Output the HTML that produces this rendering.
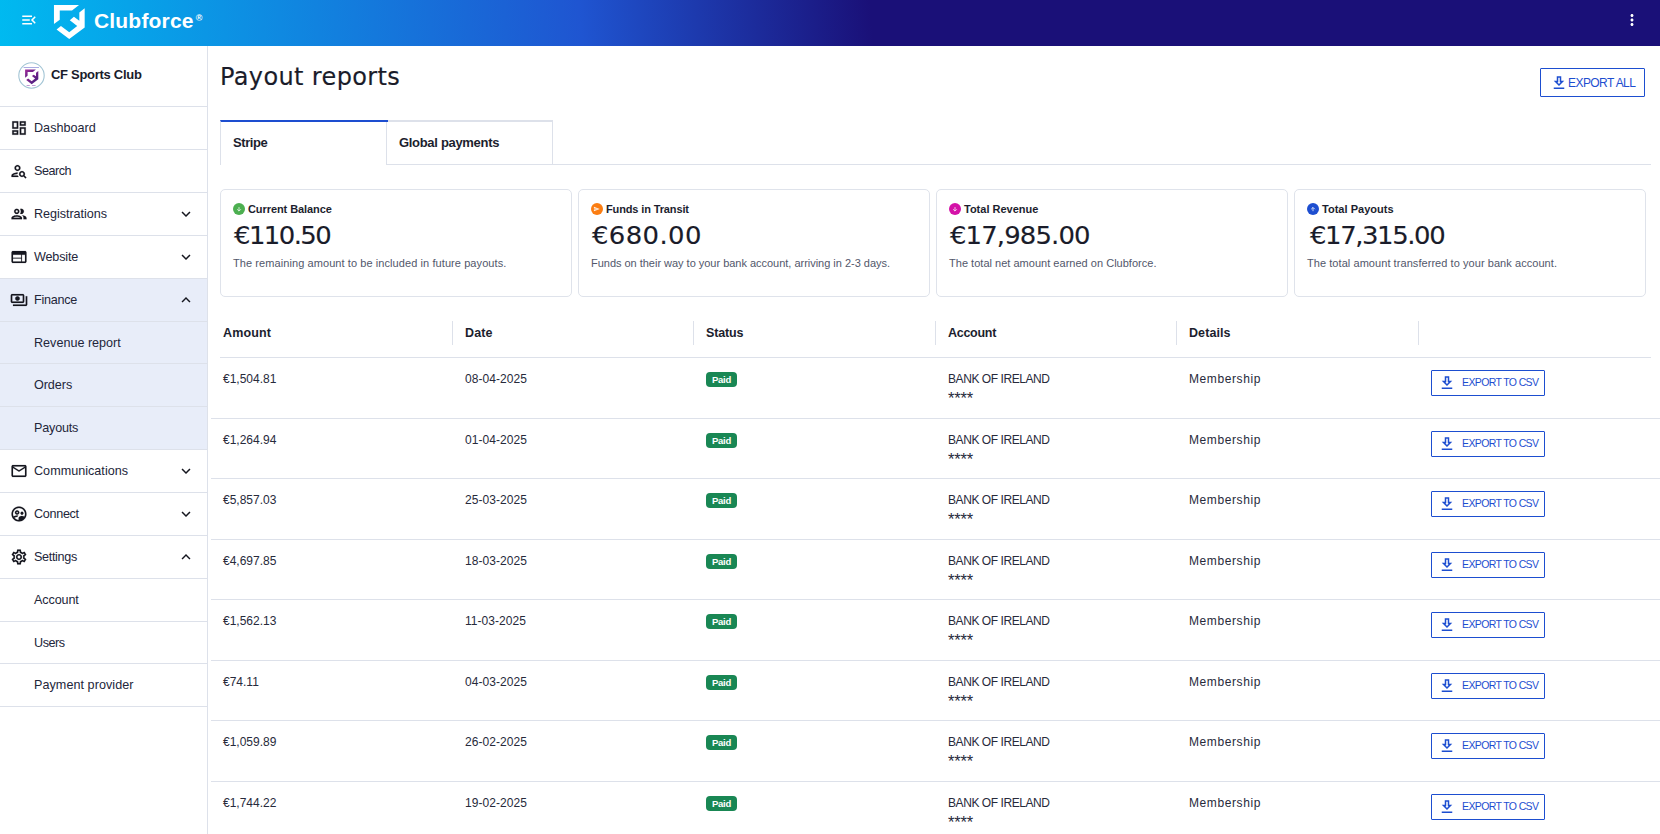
<!DOCTYPE html>
<html lang="en">
<head>
<meta charset="utf-8">
<title>Payout reports</title>
<style>
*{box-sizing:border-box}
html,body{margin:0;padding:0}
body{width:1660px;height:834px;overflow:hidden;background:#fff;color:#1c1e2e;font-family:"Liberation Sans",sans-serif;font-size:13px;position:relative}
.hdr{position:absolute;left:0;top:0;width:1660px;height:46px;background:linear-gradient(85deg,#00baf0 0%,#1f55d1 35%,#1a1078 52.5%,#1a1078 100%)}
.hdr svg{position:absolute}
.brand{position:absolute;left:94px;top:9px;color:#fff;font-weight:bold;font-size:21px;line-height:24px;white-space:nowrap}
.brand sup{font-size:9px;font-weight:bold;position:absolute;top:-3px;margin-left:2px;line-height:24px}
.side{position:absolute;left:0;top:46px;width:208px;height:788px;border-right:1px solid #dde1ea;background:#fff}
.club{position:absolute;left:0;top:0;width:207px;height:61px;border-bottom:1px solid #dde1ea}
.club .av{position:absolute;left:18px;top:16px;width:27px;height:27px}
.club .nm{position:absolute;left:51px;top:21px;font-weight:bold;font-size:13px;line-height:16px;white-space:nowrap;color:#1a1c2b}
.mi{position:absolute;left:0;width:207px;border-bottom:1px solid #dde1ea;white-space:nowrap}
.mi.on{background:#e8edf9}
.mi .t{position:absolute;left:34px;top:13px;font-size:12.6px;line-height:16px;color:#23263a}
.mi svg.ic{position:absolute;left:10px;top:12px;width:18px;height:18px;fill:#15161f;stroke:#15161f;stroke-width:.2}
.mi svg.ch{position:absolute;left:177px;top:12px;width:18px;height:18px;fill:#15161f}
.main{position:absolute;left:208px;top:46px;width:1452px;height:788px;overflow:hidden}
h1{position:absolute;left:12px;top:15px;-webkit-text-stroke:.15px #1a1c2a;margin:0;font-weight:normal;font-family:"DejaVu Sans","Liberation Sans",sans-serif;font-size:24px;line-height:32px;white-space:nowrap;color:#1a1c2a}
.btn{position:absolute;border:1px solid #1d4ed0;border-radius:1px;color:#1d4ed0;background:#fff;white-space:nowrap}
.btn svg{position:absolute;width:18px;height:18px;fill:#1d4ed0}
.btn .x{position:absolute;left:27px;top:7px;font-size:12px;line-height:15px}
.b2{left:1220px;top:12px;width:114px;height:26px}
.b2 svg{left:6px;top:3px}
.btn.b2 .x{left:30px;top:4px;font-size:10.5px;line-height:14px}
.tab{position:absolute;top:74px;height:45px;width:167px;font-weight:bold;font-size:13px;white-space:nowrap;border-left:1px solid #dde1ea;border-top:2px solid #dde1ea}
.tab span{position:absolute;left:12px;top:13px;line-height:16px}
.t1{left:12px;width:168px;z-index:2;border-top-color:#1d4ed0}
.t2{left:178px;width:167px;border-right:1px solid #dde1ea}
.tabline{position:absolute;left:179px;top:118px;width:1264px;height:1px;background:#dde1ea}
.card{position:absolute;top:143px;width:352px;height:108px;border:1px solid #dfe3eb;border-radius:5px;background:#fff}
.card .dot{position:absolute;left:12px;top:13px;width:12px;height:12px}
.card .lb{position:absolute;left:27px;top:12px;font-weight:bold;font-size:11px;line-height:14px;white-space:nowrap}
.card .am{position:absolute;left:13px;top:30px;transform:scaleX(1.05);transform-origin:0 0;-webkit-text-stroke:.15px #1a1c2a;color:#1a1c2a;font-family:"DejaVu Sans","Liberation Sans",sans-serif;font-size:24.7px;line-height:32px;white-space:nowrap}
.card.k4 .am{left:15px}
.card .ds{position:absolute;left:12px;top:66px;font-size:11px;line-height:14px;white-space:nowrap;color:#52576b}
.th{position:absolute;top:279px;font-weight:bold;font-size:12.5px;line-height:16px;white-space:nowrap}
.vs{position:absolute;top:275px;width:1px;height:24px;background:#dde1ea}
.hl{position:absolute;left:12px;top:311px;width:1431px;height:1px;background:#dde1ea}
.row{position:absolute;left:3px;width:1449px;border-bottom:1px solid #dde1ea;font-size:12px;white-space:nowrap;color:#272a3b}
.row span{position:absolute;line-height:15px;top:14px}
.row .c1{left:12px}.row .c2{left:254px}.row .c4{left:737px}.row .c4b{left:737px;top:32.5px;font-size:16.5px;letter-spacing:-0.15px}.row .c5{left:978px}
.row .bd{left:495px;top:14px;width:31px;height:15px;border-radius:4px;background:#198754;color:#fff;font-weight:bold;font-size:9.5px;line-height:15.5px;text-align:center}
.row .bd span{position:static}
</style>
</head>
<body>
<div class="hdr">
<svg style="left:20px;top:11px;width:18px;height:18px;fill:#fff" viewBox="0 0 24 24"><path d="M3 18h13v-2H3v2zm0-5h10v-2H3v2zm0-7v2h13V6H3zm18 9.59L17.42 12 21 8.41 19.59 7l-5 5 5 5L21 15.59z"/></svg>
<svg style="left:0;top:0;width:100px;height:46px" viewBox="0 0 100 46"><polygon fill="#fff" points="53.96,5.07 79.05,5.07 72,10.48 59.75,10.48 59.75,19.69 53.96,24"/><polygon fill="#fff" points="84.68,8.27 84.68,27.58 69.24,39.05 56.55,29.5 60.96,26.03 69.24,32.27 77.23,25.92 69.79,20.13 73.92,16.82 79.33,20.68 79.33,12.41"/></svg>
<div class="brand"><span style="letter-spacing:0.18px">Clubforce</span><sup>®</sup></div>
<svg style="left:1623px;top:11px;width:18px;height:18px;fill:#fff" viewBox="0 0 24 24"><path d="M12 8c1.1 0 2-.9 2-2s-.9-2-2-2-2 .9-2 2 .9 2 2 2zm0 2c-1.1 0-2 .9-2 2s.9 2 2 2 2-.9 2-2-.9-2-2-2zm0 6c-1.1 0-2 .9-2 2s.9 2 2 2 2-.9 2-2-.9-2-2-2z"/></svg>
</div>
<div class="side">
<div class="club"><svg class="av" viewBox="0 0 27 27"><defs><linearGradient id="pg" x1="0" y1="0" x2="1" y2="1"><stop offset="0" stop-color="#a42c9b"/><stop offset="1" stop-color="#3a1a78"/></linearGradient></defs><circle cx="13.5" cy="13.5" r="12.7" fill="#fff" stroke="#a3c5d5" stroke-width="1.1"/><g transform="translate(-16.1,5.4) scale(0.43)" fill="url(#pg)"><polygon points="53.96,5.07 79.05,5.07 72,10.48 59.75,10.48 59.75,19.69 53.96,24"/><polygon points="84.68,8.27 84.68,27.58 69.24,39.05 56.55,29.5 60.96,26.03 69.24,32.27 77.23,25.92 69.79,20.13 73.92,16.82 79.33,20.68 79.33,12.41"/></g><rect x="5.6" y="5.2" width="15.4" height="0.7" fill="#5b63c9" opacity=".75"/><rect x="8.6" y="23" width="3.2" height="0.9" fill="#8a4ab0" opacity=".6"/><rect x="14" y="23" width="3.6" height="0.9" fill="#8a4ab0" opacity=".6"/></svg><span class="nm" style="letter-spacing:-0.29px">CF Sports Club</span></div>
<div class="mi" style="top:61px;height:43px"><svg class="ic" viewBox="0 0 24 24"><path d="M19 5v2h-4V5h4M9 5v6H5V5h4m10 8v6h-4v-6h4M9 17v2H5v-2h4M21 3h-8v6h8V3zM11 3H3v10h8V3zm10 8h-8v10h8V11zm-10 4H3v6h8v-6z"/></svg><span class="t" style="letter-spacing:0.02px">Dashboard</span></div>
<div class="mi" style="top:104px;height:43px"><svg class="ic" viewBox="0 0 24 24"><path d="M10 12c2.21 0 4-1.79 4-4s-1.79-4-4-4-4 1.79-4 4 1.79 4 4 4zm0-6c1.1 0 2 .9 2 2s-.9 2-2 2-2-.9-2-2 .9-2 2-2zM4 18c.22-.72 3.31-2 6-2 0-.7.13-1.37.35-1.99C7.62 13.91 2 15.27 2 18v2h9.540c-.52-.58-.93-1.25-1.19-2H4zm15.43.02c.36-.59.57-1.28.57-2.02 0-2.21-1.79-4-4-4s-4 1.790-4 4 1.790 4 4 4c.74 0 1.430-.22 2.020-.57L20.590 22 22 20.590l-2.570-2.570zM16 18c-1.100 0-2-.9-2-2s.9-2 2-2 2 .9 2 2-.9 2-2 2z"/></svg><span class="t" style="letter-spacing:-0.48px">Search</span></div>
<div class="mi" style="top:147px;height:43px"><svg class="ic" viewBox="0 0 24 24"><path d="M9 13.75c-2.340 0-7 1.170-7 3.500V19h14v-1.750c0-2.330-4.660-3.500-7-3.500zM4.340 17c.840-.580 2.870-1.250 4.660-1.250s3.820.670 4.660 1.250H4.340zM9 12c1.930 0 3.500-1.570 3.500-3.500S10.930 5 9 5 5.500 6.570 5.500 8.500 7.070 12 9 12zm0-5c.830 0 1.500.670 1.500 1.500S9.830 10 9 10s-1.500-.670-1.500-1.500S8.170 7 9 7zm7.040 6.810c1.160.840 1.960 1.960 1.960 3.440V19h4v-1.750c0-2.020-3.500-3.170-5.960-3.440zM15 12c1.930 0 3.500-1.570 3.500-3.500S16.930 5 15 5c-.540 0-1.040.130-1.500.350.630.890 1 1.980 1 3.150s-.370 2.260-1 3.150c.460.220.960.350 1.500.350z"/></svg><span class="t" style="letter-spacing:-0.04px">Registrations</span><svg class="ch" viewBox="0 0 24 24"><path d="M16.590 8.590L12 13.170 7.410 8.590 6 10l6 6 6-6z"/></svg></div>
<div class="mi" style="top:190px;height:43px"><svg class="ic" viewBox="0 0 24 24"><path d="M20 4H4c-1.100 0-1.990.9-1.990 2L2 18c0 1.100.9 2 2 2h16c1.100 0 2-.9 2-2V6c0-1.100-.9-2-2-2zm-5 14H4v-4h11v4zm0-5H4V9h11v4zm5 5h-4V9h4v9z"/></svg><span class="t" style="letter-spacing:-0.16px">Website</span><svg class="ch" viewBox="0 0 24 24"><path d="M16.590 8.590L12 13.170 7.410 8.590 6 10l6 6 6-6z"/></svg></div>
<div class="mi on" style="top:233px;height:43px"><svg class="ic" viewBox="0 0 24 24"><path d="M19 14V6c0-1.100-.9-2-2-2H3c-1.100 0-2 .9-2 2v8c0 1.100.9 2 2 2h14c1.100 0 2-.9 2-2zm-2 0H3V6h14v8zm-7-7c-1.660 0-3 1.340-3 3s1.340 3 3 3 3-1.340 3-3-1.340-3-3-3zm13 0v11c0 1.100-.9 2-2 2H4v-2h17V7h2z"/></svg><span class="t" style="letter-spacing:-0.25px">Finance</span><svg class="ch" viewBox="0 0 24 24"><path d="M12 8l-6 6 1.410 1.410L12 10.830l4.590 4.580L18 14z"/></svg></div>
<div class="mi on" style="top:276px;height:42px"><span class="t" style="letter-spacing:0.0px">Revenue report</span></div>
<div class="mi on" style="top:318px;height:43px"><span class="t" style="letter-spacing:-0.06px">Orders</span></div>
<div class="mi on" style="top:361px;height:43px"><span class="t" style="letter-spacing:-0.19px">Payouts</span></div>
<div class="mi" style="top:404px;height:43px"><svg class="ic" viewBox="0 0 24 24"><path d="M22 6c0-1.100-.9-2-2-2H4c-1.100 0-2 .9-2 2v12c0 1.100.9 2 2 2h16c1.100 0 2-.9 2-2V6zm-2 0l-8 5-8-5h16zm0 12H4V8l8 5 8-5v10z"/></svg><span class="t" style="letter-spacing:0.02px">Communications</span><svg class="ch" viewBox="0 0 24 24"><path d="M16.590 8.590L12 13.170 7.410 8.590 6 10l6 6 6-6z"/></svg></div>
<div class="mi" style="top:447px;height:43px"><svg class="ic" viewBox="0 0 24 24"><path d="M12.500 10c0-1.650-1.350-3-3-3s-3 1.350-3 3 1.350 3 3 3 3-1.350 3-3zm-3 1c-.550 0-1-.450-1-1s.450-1 1-1 1 .450 1 1-.450 1-1 1zm6.500 2c1.110 0 2-.890 2-2 0-1.110-.890-2-2-2-1.110 0-2.010.890-2 2 0 1.110.890 2 2 2zM11.990 2.010c-5.520 0-10 4.480-10 10s4.480 10 10 10 10-4.480 10-10-4.480-10-10-10zM5.840 17.120c.680-.540 2.270-1.110 3.660-1.110.070 0 .150.010.230.010.240-.640.670-1.290 1.300-1.860-.560-.100-1.090-.160-1.530-.160-1.300 0-3.390.450-4.730 1.430-.5-1.040-.780-2.200-.780-3.430 0-4.410 3.590-8 8-8s8 3.590 8 8c0 1.200-.270 2.340-.750 3.370-1-.590-2.360-.870-3.240-.870-1.520 0-4.500.810-4.500 2.700v2.780c-2.270-.130-4.290-1.210-5.660-2.860z"/></svg><span class="t" style="letter-spacing:-0.3px">Connect</span><svg class="ch" viewBox="0 0 24 24"><path d="M16.590 8.590L12 13.170 7.410 8.590 6 10l6 6 6-6z"/></svg></div>
<div class="mi" style="top:490px;height:43px"><svg class="ic" viewBox="0 0 24 24"><path d="M19.430 12.980c.040-.320.070-.640.070-.980 0-.340-.030-.660-.070-.980l2.110-1.650c.190-.150.240-.420.120-.640l-2-3.460c-.090-.160-.260-.250-.440-.250-.060 0-.120.010-.170.030l-2.490 1c-.520-.400-1.080-.730-1.690-.980l-.380-2.650C14.460 2.180 14.250 2 14 2h-4c-.250 0-.460.180-.490.420l-.380 2.650c-.610.250-1.170.590-1.690.980l-2.490-1c-.060-.020-.120-.030-.180-.030-.170 0-.340.090-.430.250l-2 3.460c-.130.220-.070.490.120.640l2.110 1.650c-.040.320-.070.650-.070.980 0 .330.030.660.070.980l-2.110 1.650c-.190.150-.240.420-.120.640l2 3.460c.090.160.260.250.440.250.060 0 .120-.010.170-.030l2.490-1c.520.400 1.080.730 1.690.980l.380 2.650c.030.240.240.420.490.420h4c.250 0 .460-.180.490-.420l.380-2.650c.610-.250 1.170-.590 1.690-.980l2.490 1c.060.020.120.030.180.030.170 0 .340-.090.430-.250l2-3.460c.120-.220.070-.490-.120-.640l-2.110-1.650zm-1.980-1.710c.040.310.050.520.050.730 0 .210-.020.430-.050.730l-.140 1.130.890.700 1.080.840-.700 1.210-1.270-.510-1.040-.420-.900.680c-.430.320-.840.560-1.250.730l-1.060.430-.160 1.130-.200 1.350h-1.400l-.190-1.350-.160-1.130-1.060-.430c-.430-.180-.830-.410-1.230-.710l-.910-.700-1.060.430-1.270.510-.700-1.210 1.080-.840.890-.700-.140-1.130c-.030-.310-.050-.540-.050-.740s.020-.430.050-.730l.140-1.130-.890-.700-1.080-.840.700-1.210 1.270.510 1.040.420.900-.680c.430-.320.840-.560 1.250-.730l1.060-.430.160-1.130.200-1.350h1.390l.190 1.350.160 1.130 1.060.430c.430.180.830.410 1.230.710l.910.700 1.060-.430 1.270-.510.700 1.210-1.070.850-.890.700.14 1.130zM12 8c-2.210 0-4 1.790-4 4s1.790 4 4 4 4-1.790 4-4-1.790-4-4-4zm0 6c-1.100 0-2-.9-2-2s.9-2 2-2 2 .9 2 2-.9 2-2 2z"/></svg><span class="t" style="letter-spacing:-0.32px">Settings</span><svg class="ch" viewBox="0 0 24 24"><path d="M12 8l-6 6 1.410 1.410L12 10.830l4.590 4.580L18 14z"/></svg></div>
<div class="mi" style="top:533px;height:43px"><span class="t" style="letter-spacing:-0.11px">Account</span></div>
<div class="mi" style="top:576px;height:42px"><span class="t" style="letter-spacing:-0.45px">Users</span></div>
<div class="mi" style="top:618px;height:43px"><span class="t" style="letter-spacing:0.05px">Payment provider</span></div>
</div>
<div class="main">
<h1><span style="letter-spacing:0.37px">Payout reports</span></h1>
<div class="btn" style="left:1332px;top:22px;width:105px;height:29px"><svg style="left:9px;top:5px" viewBox="0 0 24 24"><path d="M19 9h-4V3H9v6H5l7 7 7-7zm-8 2V5h2v6h1.170L12 13.170 9.830 11H11zm-6 7h14v2H5z"/></svg><span class="x" style="letter-spacing:-0.56px">EXPORT ALL</span></div>
<div class="tab t1"><span style="letter-spacing:-0.4px">Stripe</span></div><div class="tab t2"><span style="letter-spacing:-0.31px">Global payments</span></div><div class="tabline"></div>
<div class="card" style="left:12px"><svg class="dot" viewBox="0 0 12 12"><circle cx="6" cy="6" r="6" fill="#4caf50"/><path d="M6 4.100v3.600M4.200 6.300L6 8.100l1.800-1.800" fill="none" stroke="#fff" stroke-opacity=".75" stroke-width="1"/></svg><span class="lb" style="letter-spacing:-0.08px">Current Balance</span><span class="am" style="letter-spacing:-1.5px">€110.50</span><span class="ds" style="letter-spacing:0.08px">The remaining amount to be included in future payouts.</span></div>
<div class="card" style="left:370px"><svg class="dot" viewBox="0 0 12 12"><circle cx="6" cy="6" r="6" fill="#fb7d12"/><path d="M2.900 3.800L8.700 6.050 2.900 8.300V6.550L7 6.050 2.900 5.550z" fill="#fff" fill-opacity=".9"/></svg><span class="lb" style="letter-spacing:-0.13px">Funds in Transit</span><span class="am" style="letter-spacing:0.36px">€680.00</span><span class="ds" style="letter-spacing:-0.02px">Funds on their way to your bank account, arriving in 2-3 days.</span></div>
<div class="card" style="left:728px"><svg class="dot" viewBox="0 0 12 12"><circle cx="6" cy="6" r="6" fill="#d412a8"/><path d="M6 4.100v3.600M4.200 6.300L6 8.100l1.800-1.800" fill="none" stroke="#fff" stroke-opacity=".75" stroke-width="1"/></svg><span class="lb" style="letter-spacing:0.0px">Total Revenue</span><span class="am" style="letter-spacing:-0.83px">€17,985.00</span><span class="ds" style="letter-spacing:0.02px">The total net amount earned on Clubforce.</span></div>
<div class="card k4" style="left:1086px"><svg class="dot" viewBox="0 0 12 12"><circle cx="6" cy="6" r="6" fill="#1d4ed0"/><path d="M6 8.200V4.600M4.200 6.200L6 4.400l1.800 1.800" fill="none" stroke="#fff" stroke-opacity=".75" stroke-width="1"/></svg><span class="lb" style="letter-spacing:0.02px">Total Payouts</span><span class="am" style="letter-spacing:-1.35px">€17,315.00</span><span class="ds" style="letter-spacing:0.06px">The total amount transferred to your bank account.</span></div>
<div class="th" style="left:15px"><span style="letter-spacing:0.14px">Amount</span></div>
<div class="th" style="left:257px"><span style="letter-spacing:0.1px">Date</span></div>
<div class="th" style="left:498px"><span style="letter-spacing:-0.14px">Status</span></div>
<div class="th" style="left:740px"><span style="letter-spacing:-0.28px">Account</span></div>
<div class="th" style="left:981px"><span style="letter-spacing:0.08px">Details</span></div>
<div class="vs" style="left:244px"></div>
<div class="vs" style="left:485px"></div>
<div class="vs" style="left:727px"></div>
<div class="vs" style="left:968px"></div>
<div class="vs" style="left:1210px"></div>
<div class="hl"></div>
<div class="row" style="top:312px;height:61px"><span class="c1" style="letter-spacing:0.0px">€1,504.81</span><span class="c2" style="letter-spacing:0.05px">08-04-2025</span><span class="bd"><span style="letter-spacing:-0.3px">Paid</span></span><span class="c4" style="letter-spacing:-0.43px">BANK OF IRELAND</span><span class="c4b">****</span><span class="c5" style="letter-spacing:0.6px">Membership</span><div class="btn b2"><svg viewBox="0 0 24 24"><path d="M19 9h-4V3H9v6H5l7 7 7-7zm-8 2V5h2v6h1.170L12 13.170 9.830 11H11zm-6 7h14v2H5z"/></svg><span class="x" style="letter-spacing:-0.62px">EXPORT TO CSV</span></div></div>
<div class="row" style="top:373px;height:60px"><span class="c1" style="letter-spacing:0.0px">€1,264.94</span><span class="c2" style="letter-spacing:0.05px">01-04-2025</span><span class="bd"><span style="letter-spacing:-0.3px">Paid</span></span><span class="c4" style="letter-spacing:-0.43px">BANK OF IRELAND</span><span class="c4b">****</span><span class="c5" style="letter-spacing:0.6px">Membership</span><div class="btn b2"><svg viewBox="0 0 24 24"><path d="M19 9h-4V3H9v6H5l7 7 7-7zm-8 2V5h2v6h1.170L12 13.170 9.830 11H11zm-6 7h14v2H5z"/></svg><span class="x" style="letter-spacing:-0.62px">EXPORT TO CSV</span></div></div>
<div class="row" style="top:433px;height:61px"><span class="c1" style="letter-spacing:0.0px">€5,857.03</span><span class="c2" style="letter-spacing:0.05px">25-03-2025</span><span class="bd"><span style="letter-spacing:-0.3px">Paid</span></span><span class="c4" style="letter-spacing:-0.43px">BANK OF IRELAND</span><span class="c4b">****</span><span class="c5" style="letter-spacing:0.6px">Membership</span><div class="btn b2"><svg viewBox="0 0 24 24"><path d="M19 9h-4V3H9v6H5l7 7 7-7zm-8 2V5h2v6h1.170L12 13.170 9.830 11H11zm-6 7h14v2H5z"/></svg><span class="x" style="letter-spacing:-0.62px">EXPORT TO CSV</span></div></div>
<div class="row" style="top:494px;height:60px"><span class="c1" style="letter-spacing:0.0px">€4,697.85</span><span class="c2" style="letter-spacing:0.05px">18-03-2025</span><span class="bd"><span style="letter-spacing:-0.3px">Paid</span></span><span class="c4" style="letter-spacing:-0.43px">BANK OF IRELAND</span><span class="c4b">****</span><span class="c5" style="letter-spacing:0.6px">Membership</span><div class="btn b2"><svg viewBox="0 0 24 24"><path d="M19 9h-4V3H9v6H5l7 7 7-7zm-8 2V5h2v6h1.170L12 13.170 9.830 11H11zm-6 7h14v2H5z"/></svg><span class="x" style="letter-spacing:-0.62px">EXPORT TO CSV</span></div></div>
<div class="row" style="top:554px;height:61px"><span class="c1" style="letter-spacing:0.0px">€1,562.13</span><span class="c2" style="letter-spacing:0.05px">11-03-2025</span><span class="bd"><span style="letter-spacing:-0.3px">Paid</span></span><span class="c4" style="letter-spacing:-0.43px">BANK OF IRELAND</span><span class="c4b">****</span><span class="c5" style="letter-spacing:0.6px">Membership</span><div class="btn b2"><svg viewBox="0 0 24 24"><path d="M19 9h-4V3H9v6H5l7 7 7-7zm-8 2V5h2v6h1.170L12 13.170 9.830 11H11zm-6 7h14v2H5z"/></svg><span class="x" style="letter-spacing:-0.62px">EXPORT TO CSV</span></div></div>
<div class="row" style="top:615px;height:60px"><span class="c1" style="letter-spacing:0.0px">€74.11</span><span class="c2" style="letter-spacing:0.05px">04-03-2025</span><span class="bd"><span style="letter-spacing:-0.3px">Paid</span></span><span class="c4" style="letter-spacing:-0.43px">BANK OF IRELAND</span><span class="c4b">****</span><span class="c5" style="letter-spacing:0.6px">Membership</span><div class="btn b2"><svg viewBox="0 0 24 24"><path d="M19 9h-4V3H9v6H5l7 7 7-7zm-8 2V5h2v6h1.170L12 13.170 9.830 11H11zm-6 7h14v2H5z"/></svg><span class="x" style="letter-spacing:-0.62px">EXPORT TO CSV</span></div></div>
<div class="row" style="top:675px;height:61px"><span class="c1" style="letter-spacing:0.0px">€1,059.89</span><span class="c2" style="letter-spacing:0.05px">26-02-2025</span><span class="bd"><span style="letter-spacing:-0.3px">Paid</span></span><span class="c4" style="letter-spacing:-0.43px">BANK OF IRELAND</span><span class="c4b">****</span><span class="c5" style="letter-spacing:0.6px">Membership</span><div class="btn b2"><svg viewBox="0 0 24 24"><path d="M19 9h-4V3H9v6H5l7 7 7-7zm-8 2V5h2v6h1.170L12 13.170 9.830 11H11zm-6 7h14v2H5z"/></svg><span class="x" style="letter-spacing:-0.62px">EXPORT TO CSV</span></div></div>
<div class="row" style="top:736px;height:61px"><span class="c1" style="letter-spacing:0.0px">€1,744.22</span><span class="c2" style="letter-spacing:0.05px">19-02-2025</span><span class="bd"><span style="letter-spacing:-0.3px">Paid</span></span><span class="c4" style="letter-spacing:-0.43px">BANK OF IRELAND</span><span class="c4b">****</span><span class="c5" style="letter-spacing:0.6px">Membership</span><div class="btn b2"><svg viewBox="0 0 24 24"><path d="M19 9h-4V3H9v6H5l7 7 7-7zm-8 2V5h2v6h1.170L12 13.170 9.830 11H11zm-6 7h14v2H5z"/></svg><span class="x" style="letter-spacing:-0.62px">EXPORT TO CSV</span></div></div>
</div>
</body>
</html>
